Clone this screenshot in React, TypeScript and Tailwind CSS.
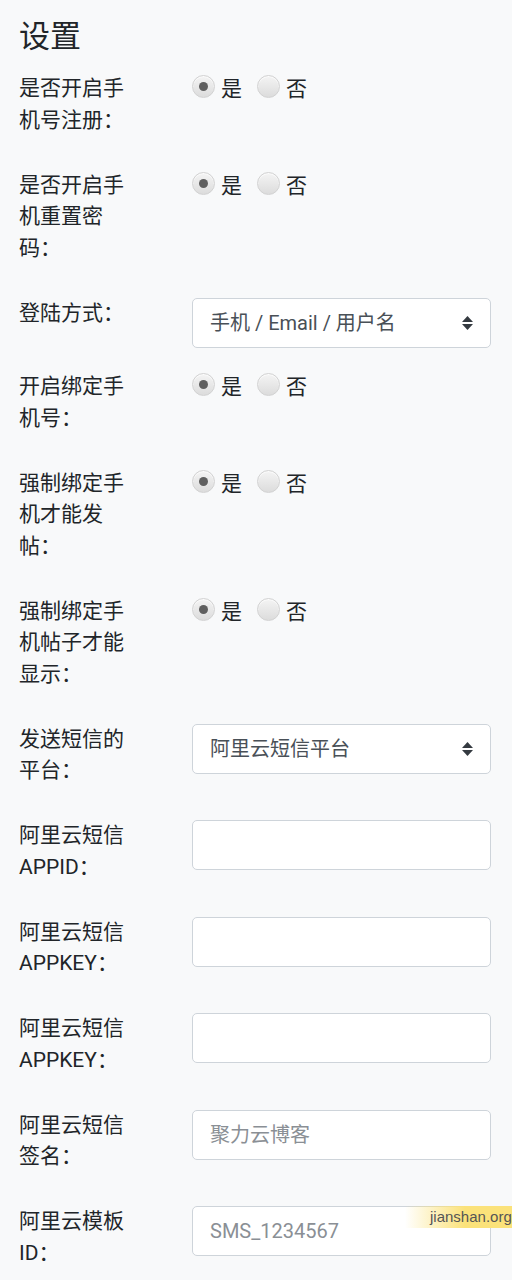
import { ReactNode } from "react"

const font = { fontFamily: 'Roboto, "Noto Sans CJK SC", sans-serif' }

function Radio({ checked }: { checked?: boolean }) {
  return (
    <span className="relative inline-flex h-[23px] w-[23px] shrink-0 items-center justify-center rounded-full border border-[#d2d2d2] bg-gradient-to-b from-[#f4f4f4] to-[#dcdcdc] shadow-[inset_0_1px_1px_rgba(255,255,255,0.8)]">
      {checked && <span className="h-[9px] w-[9px] rounded-full bg-[#5f5f5f]" />}
    </span>
  )
}

function YesNo() {
  return (
    <div className="flex items-start text-[21px] leading-[31.5px] text-[#212529]">
      <span className="mt-[2px] flex"><Radio checked /></span>
      <span className="ml-[6px] mt-[1px]">是</span>
      <span className="ml-[15px] mt-[2px] flex"><Radio /></span>
      <span className="ml-[6px] mt-[1px]">否</span>
    </div>
  )
}

function Select({ value }: { value: string }) {
  return (
    <div className="flex h-[50px] w-[299px] items-center justify-between rounded-[5px] border border-[#ced4da] bg-white pl-[17px] pr-[16px] text-[20px] text-[#495057]">
      <span>{value}</span>
      <svg width="13" height="16" viewBox="0 0 13 16">
        <path d="M6.5 1 L12 7 L1 7 Z" fill="#343a40" />
        <path d="M6.5 15 L12 9 L1 9 Z" fill="#343a40" />
      </svg>
    </div>
  )
}

function Input({ placeholder }: { placeholder?: string }) {
  return (
    <div className="flex h-[50px] w-[299px] items-center rounded-[5px] border border-[#ced4da] bg-white pl-[17px] text-[20px] text-[#8a8f95]">
      {placeholder}
    </div>
  )
}

function Row({ label, children }: { label: ReactNode; children: ReactNode }) {
  return (
    <div className="mb-[23.5px] flex">
      <div className="w-[173px] shrink-0 pb-[10px] pr-[50px] text-[21px] leading-[31.5px] text-[#212529]">{label}</div>
      <div>{children}</div>
    </div>
  )
}

export default function App() {
  return (
    <div className="relative min-h-[1280px] w-[512px] overflow-hidden bg-[#f8f9fa] pl-[19px] pt-[18px]" style={font}>
      <h1 className="mb-[18px] text-[31px] font-normal leading-[37px] text-[#212529]">设置</h1>

      <Row label="是否开启手机号注册："><YesNo /></Row>
      <Row label="是否开启手机重置密码："><YesNo /></Row>
      <Row label="登陆方式："><Select value="手机 / Email / 用户名" /></Row>
      <Row label="开启绑定手机号："><YesNo /></Row>
      <Row label="强制绑定手机才能发帖："><YesNo /></Row>
      <Row label="强制绑定手机帖子才能显示："><YesNo /></Row>
      <Row label="发送短信的平台："><Select value="阿里云短信平台" /></Row>
      <Row label={<>阿里云短信<br />APPID：</>}><Input /></Row>
      <Row label={<>阿里云短信<br />APPKEY：</>}><Input /></Row>
      <Row label={<>阿里云短信<br />APPKEY：</>}><Input /></Row>
      <Row label={<>阿里云短信<br />签名：</>}><Input placeholder="聚力云博客" /></Row>
      <Row label={<>阿里云模板<br />ID：</>}><Input placeholder="SMS_1234567" /></Row>

      <div
        className="absolute left-[405px] top-[1206px] flex h-[22px] w-[120px] items-center bg-gradient-to-r from-[rgba(252,226,110,0)] via-[#fbe27a] to-[#fbe27a] pl-[25px] text-[15px] text-[#555]"
        style={{ fontFamily: '"Liberation Sans", Arial, sans-serif' }}
      >
        jianshan.org
      </div>
    </div>
  )
}
